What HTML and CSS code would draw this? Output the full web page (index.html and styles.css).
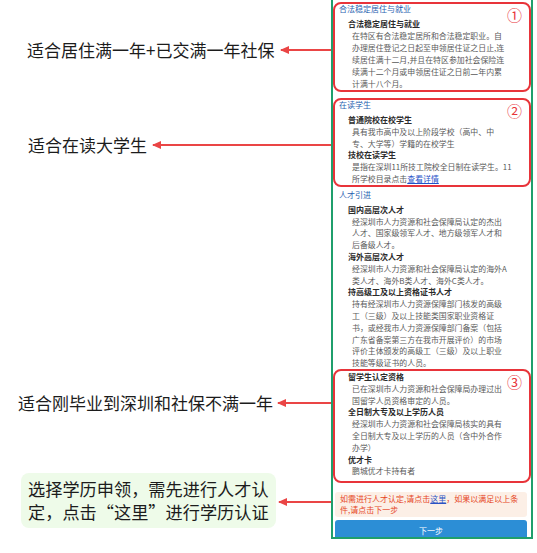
FILE: index.html
```html
<!DOCTYPE html>
<html lang="zh-CN">
<head>
<meta charset="utf-8">
<title>申领条件说明</title>
<link rel="stylesheet" href="styles.css">
</head>
<body>
<div class="page">
  <div class="notes">
    <div class="callout callout-1">
      <span class="callout-text">适合居住满一年+已交满一年社保</span>
      <span class="arrow"></span>
    </div>
    <div class="callout callout-2">
      <span class="callout-text">适合在读大学生</span>
      <span class="arrow"></span>
    </div>
    <div class="callout callout-3">
      <span class="callout-text">适合刚毕业到深圳和社保不满一年</span>
      <span class="arrow"></span>
    </div>
    <div class="callout callout-4">
      <span class="callout-text callout-box">选择学历申领，需先进行人才认<br>定，点击“这里”进行学历认证</span>
      <span class="arrow"></span>
    </div>
  </div>

  <div class="phone">
    <section class="sec boxed s1">
      <h3 class="sec-title">合法稳定居住与就业</h3>
      <span class="num">①</span>
      <div class="item">
        <div class="item-title">合法稳定居住与就业</div>
        <p class="item-desc">在特区有合法稳定居所和合法稳定职业。自<br>办理居住登记之日起至申领居住证之日止,连<br>续居住满十二月,并且在特区参加社会保险连<br>续满十二个月或申领居住证之日前二年内累<br>计满十八个月。</p>
      </div>
    </section>

    <section class="sec boxed s2">
      <h3 class="sec-title">在读学生</h3>
      <span class="num">②</span>
      <div class="item">
        <div class="item-title">普通院校在校学生</div>
        <p class="item-desc">具有我市高中及以上阶段学校（高中、中<br>专、大学等）学籍的在校学生</p>
      </div>
      <div class="item">
        <div class="item-title">技校在读学生</div>
        <p class="item-desc">是指在深圳11所技工院校全日制在读学生。11<br>所学校目录点击<a class="link" href="#">查看详情</a></p>
      </div>
    </section>

    <section class="sec s3">
      <h3 class="sec-title">人才引进</h3>
      <div class="item">
        <div class="item-title">国内高层次人才</div>
        <p class="item-desc">经深圳市人力资源和社会保障局认定的杰出<br>人才、国家级领军人才、地方级领军人才和<br>后备级人才。</p>
      </div>
      <div class="item">
        <div class="item-title">海外高层次人才</div>
        <p class="item-desc">经深圳市人力资源和社会保障局认定的海外A<br>类人才、海外B类人才、海外C类人才。</p>
      </div>
      <div class="item">
        <div class="item-title">持高级工及以上资格证书人才</div>
        <p class="item-desc">持有经深圳市人力资源保障部门核发的高级<br>工（三级）及以上技能类国家职业资格证<br>书，或经我市人力资源保障部门备案（包括<br>广东省备案第三方在我市开展评价）的市场<br>评价主体颁发的高级工（三级）及以上职业<br>技能等级证书的人员。</p>
      </div>
      <div class="group boxed">
        <span class="num">③</span>
        <div class="item">
          <div class="item-title">留学生认定资格</div>
          <p class="item-desc">已在深圳市人力资源和社会保障局办理过出<br>国留学人员资格审定的人员。</p>
        </div>
        <div class="item">
          <div class="item-title">全日制大专及以上学历人员</div>
          <p class="item-desc">经深圳市人力资源和社会保障局核实的具有<br>全日制大专及以上学历的人员（含中外合作<br>办学）</p>
        </div>
        <div class="item">
          <div class="item-title">优才卡</div>
          <p class="item-desc">鹏城优才卡持有者</p>
        </div>
      </div>
    </section>

    <div class="notice">如需进行人才认定,请点击<a class="link" href="#">这里</a>，如果以满足以上条<br>件,请点击下一步</div>
    <button class="next" type="button">下一步</button>
  </div>
</div>
</body>
</html>
```

FILE: styles.css
```css
* { box-sizing: border-box; }

html, body {
  margin: 0;
  padding: 0;
  background: #ffffff;
}

body {
  font-family: "Noto Sans CJK SC", "Noto Sans", sans-serif;
  color: #222222;
}

.page {
  display: grid;
  grid-template-columns: 331px 202px;
  align-items: start;
  height: 553px;
}

/* ---------- left annotations ---------- */
.notes {
  display: flex;
  flex-direction: column;
}

.callout {
  display: flex;
  align-items: center;
}

.callout-text {
  font-size: 17px;
  line-height: 24px;
  color: #1c1c1c;
  white-space: nowrap;
}

.callout-1 { margin-top: 38px; padding-left: 27px; }
.callout-2 { margin-top: 71px; padding-left: 28px; }
.callout-3 { margin-top: 234px; padding-left: 18px; }
.callout-4 { margin-top: 58px; padding-left: 21px; }

.callout-1 .arrow { margin-left: 7px; }
.callout-2 .arrow { margin-left: 6px; }
.callout-3 .arrow { margin-left: 5px; }
.callout-4 .arrow { margin-left: 3px; margin-top: 3px; }

.callout-box {
  display: block;
  background: #eefbe9;
  border-radius: 8px;
  padding: 4px 7px 5px 7px;
  line-height: 23px;
  font-size: 17.2px;
}

.arrow {
  flex: 1;
  height: 2px;
  background: #ea4545;
  position: relative;
}

.arrow::before {
  content: "";
  position: absolute;
  left: -1px;
  top: -3.5px;
  border-right: 9px solid #ea4545;
  border-top: 4.5px solid transparent;
  border-bottom: 4.5px solid transparent;
}

/* ---------- phone screenshot ---------- */
.phone {
  height: 539px;
  border: 2px solid #1f9f6c;
  border-top: none;
  overflow: hidden;
  background: #ffffff;
  display: flex;
  flex-direction: column;
}

.sec {
  position: relative;
  padding-left: 6px;
  line-height: 11.8px;
}

.boxed {
  position: relative;
  border: 2px solid #e8343a;
  border-radius: 8px;
  padding-left: 4px;
}

.s1 {
  margin-top: 2px;
  line-height: 12px;
}

.s2 {
  margin-top: 6px;
}

.s3 {
  margin-top: 3px;
}

.sec-title {
  margin: 0;
  font-size: 8px;
  line-height: 9px;
  font-weight: normal;
  color: #2a62b0;
}

.sec-title + .num + .item,
.sec-title + .item {
  margin-top: 5px;
}

.item {
  margin-left: 9px;
}

.item-title {
  font-size: 8px;
  font-weight: bold;
  color: #2b2b2b;
}

.item-desc {
  margin: 0;
  padding-left: 4px;
  font-size: 7.9px;
  color: #5a5a5a;
  white-space: nowrap;
}

.link {
  color: #1f52c8;
  text-decoration: underline;
}

.num {
  position: absolute;
  top: 3px;
  right: 7px;
  font-size: 15px;
  line-height: 16px;
  color: #e8343a;
}

.group {
  margin-left: -6px;
  padding-bottom: 4px;
}

.notice {
  margin: 9px 4px 0 2px;
  padding: 1px 5px 2px 5px;
  background: #fcefe6;
  border-radius: 3px;
  font-size: 8px;
  line-height: 11px;
  color: #e6461e;
  white-space: nowrap;
}

.notice .link {
  color: #2a52c4;
}

.next {
  margin: 3px 4px 0 2px;
  height: 22px;
  flex: none;
  border: none;
  border-radius: 3px 3px 0 0;
  background: #2c8ed6;
  color: #ffffff;
  font-family: "Noto Sans CJK SC", sans-serif;
  font-size: 8px;
  line-height: 22px;
  padding: 0;
}
```
